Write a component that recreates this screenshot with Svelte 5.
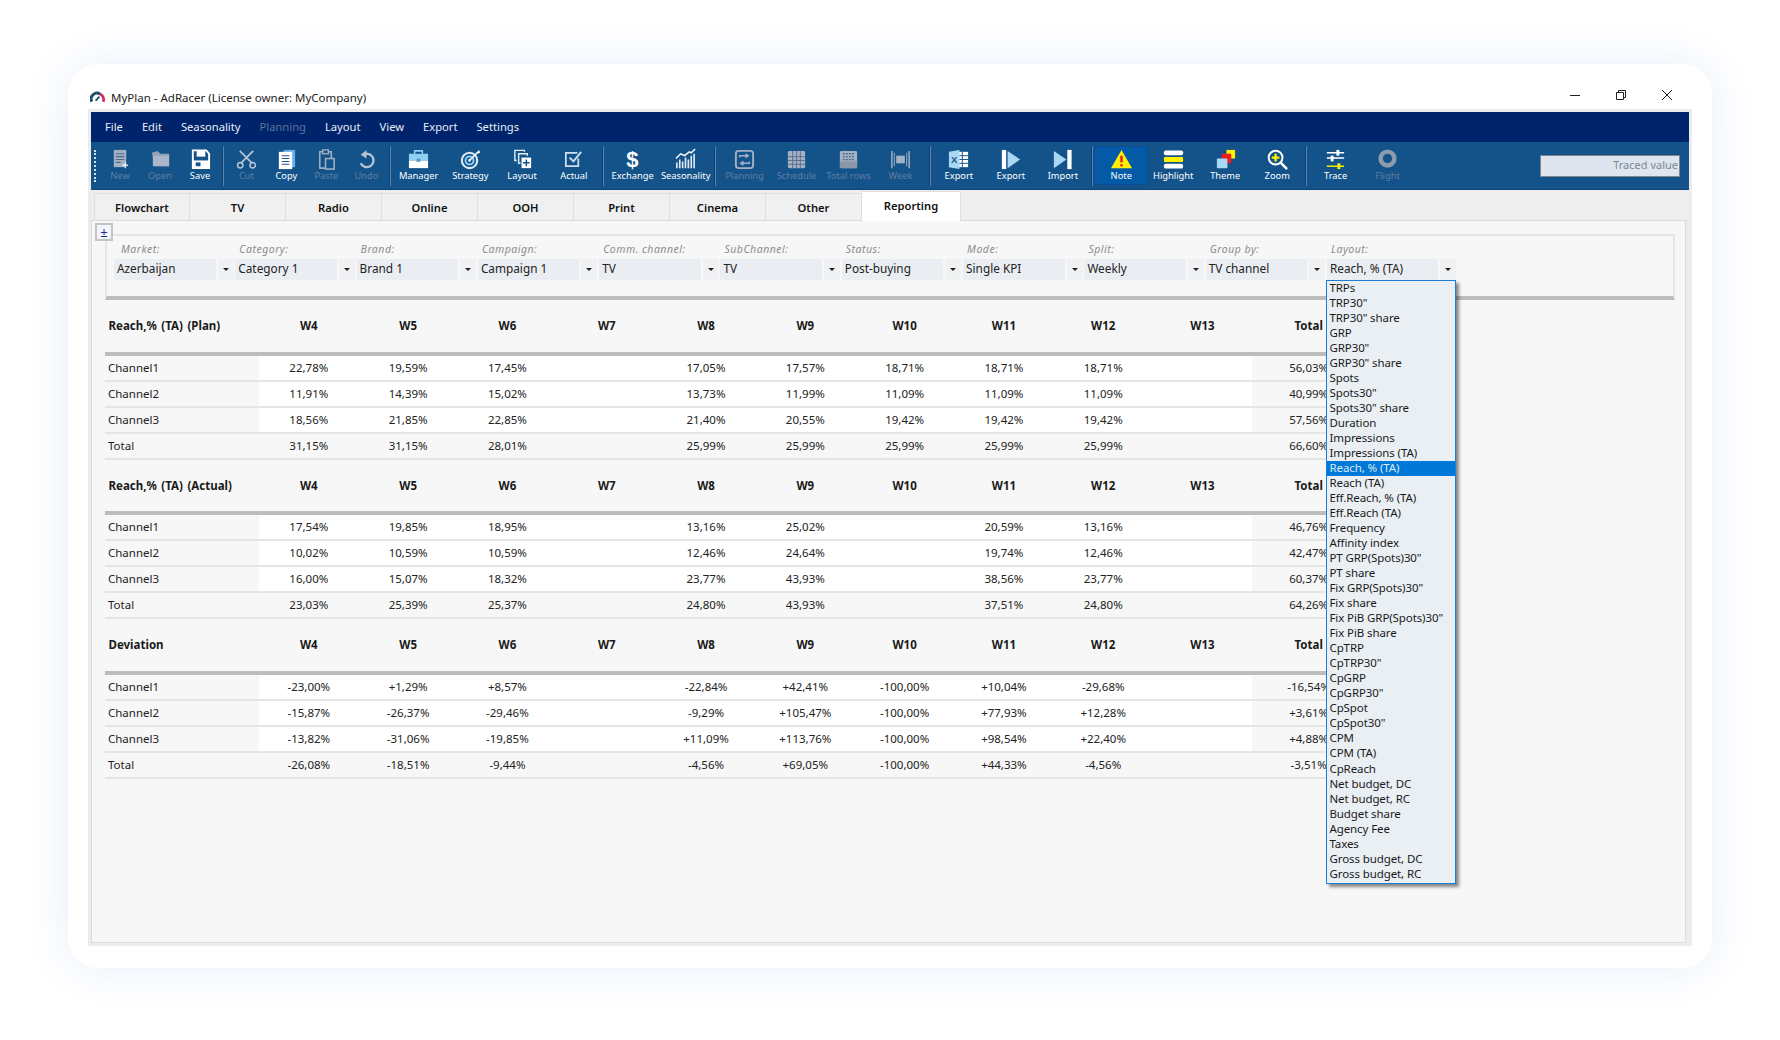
<script>
  const menu = [['File',false],['Edit',false],['Seasonality',false],['Planning',true],['Layout',false],['View',false],['Export',false],['Settings',false]];
  const groups = [
    {w:40,items:[['new','New',1],['open','Open',1],['save','Save',0]]},
    {w:40,items:[['cut','Cut',1],['copy','Copy',0],['paste','Paste',1],['undo','Undo',1]]},
    {w:51.75,items:[['manager','Manager',0],['strategy','Strategy',0],['layout','Layout',0],['actual','Actual',0]]},
    {w:53,items:[['exchange','Exchange',0],['season','Seasonality',0]]},
    {w:52,items:[['planning','Planning',1],['schedule','Schedule',1],['totalrows','Total rows',1],['week','Week',1]]},
    {w:52,items:[['excel','Export',0],['export','Export',0],['import','Import',0]]},
    {w:52,items:[['note','Note',0],['highlight','Highlight',0],['theme','Theme',0],['zoom','Zoom',0]]},
    {w:52,items:[['trace','Trace',0],['flight','Flight',1]]}
  ];
  const tabs = ['Flowchart','TV','Radio','Online','OOH','Print','Cinema','Other'];
  const filters = [['Market:','Azerbaijan'],['Category:','Category 1'],['Brand:','Brand 1'],['Campaign:','Campaign 1'],['Comm. channel:','TV'],['SubChannel:','TV'],['Status:','Post-buying'],['Mode:','Single KPI'],['Split:','Weekly'],['Group by:','TV channel']];
  const weeks = ['W4','W5','W6','W7','W8','W9','W10','W11','W12','W13','Total'];
  const blocks = [
    {title:'Reach,% (TA) (Plan)',rows:[
      ['Channel1','22,78%','19,59%','17,45%','','17,05%','17,57%','18,71%','18,71%','18,71%','','56,03%'],
      ['Channel2','11,91%','14,39%','15,02%','','13,73%','11,99%','11,09%','11,09%','11,09%','','40,99%'],
      ['Channel3','18,56%','21,85%','22,85%','','21,40%','20,55%','19,42%','19,42%','19,42%','','57,56%'],
      ['Total','31,15%','31,15%','28,01%','','25,99%','25,99%','25,99%','25,99%','25,99%','','66,60%']]},
    {title:'Reach,% (TA) (Actual)',rows:[
      ['Channel1','17,54%','19,85%','18,95%','','13,16%','25,02%','','20,59%','13,16%','','46,76%'],
      ['Channel2','10,02%','10,59%','10,59%','','12,46%','24,64%','','19,74%','12,46%','','42,47%'],
      ['Channel3','16,00%','15,07%','18,32%','','23,77%','43,93%','','38,56%','23,77%','','60,37%'],
      ['Total','23,03%','25,39%','25,37%','','24,80%','43,93%','','37,51%','24,80%','','64,26%']]},
    {title:'Deviation',rows:[
      ['Channel1','-23,00%','+1,29%','+8,57%','','-22,84%','+42,41%','-100,00%','+10,04%','-29,68%','','-16,54%'],
      ['Channel2','-15,87%','-26,37%','-29,46%','','-9,29%','+105,47%','-100,00%','+77,93%','+12,28%','','+3,61%'],
      ['Channel3','-13,82%','-31,06%','-19,85%','','+11,09%','+113,76%','-100,00%','+98,54%','+22,40%','','+4,88%'],
      ['Total','-26,08%','-18,51%','-9,44%','','-4,56%','+69,05%','-100,00%','+44,33%','-4,56%','','-3,51%']]}
  ];
  const layouts = ['TRPs','TRP30"','TRP30" share','GRP','GRP30"','GRP30" share','Spots','Spots30"','Spots30" share','Duration','Impressions','Impressions (TA)','Reach, % (TA)','Reach (TA)','Eff.Reach, % (TA)','Eff.Reach (TA)','Frequency','Affinity index','PT GRP(Spots)30"','PT share','Fix GRP(Spots)30"','Fix share','Fix PiB GRP(Spots)30"','Fix PiB share','CpTRP','CpTRP30"','CpGRP','CpGRP30"','CpSpot','CpSpot30"','CPM','CPM (TA)','CpReach','Net budget, DC','Net budget, RC','Budget share','Agency Fee','Taxes','Gross budget, DC','Gross budget, RC'];
</script>

<div class="page">
  <div class="card">
    <div class="titlebar">
      <svg class="logo" viewBox="0 0 16 12"><path d="M2 11 A6.2 6.2 0 0 1 11 3" fill="none" stroke="#1f4f6b" stroke-width="3"/><path d="M11 3 A6.2 6.2 0 0 1 14 11" fill="none" stroke="#e0245e" stroke-width="3"/><path d="M6 10 L10 5.5" stroke="#1f4f6b" stroke-width="2"/></svg>
      <span class="apptitle">MyPlan - AdRacer (License owner: MyCompany)</span>
      <div class="winctl">
        <svg viewBox="0 0 12 12"><path d="M1 6.5H11" stroke="#222" stroke-width="1"/></svg>
        <svg viewBox="0 0 12 12"><path d="M1.5 3.5H8.5V10.5H1.5ZM3.5 3.5V1.5H10.5V8.5H8.5" fill="none" stroke="#222" stroke-width="1"/></svg>
        <svg viewBox="0 0 12 12"><path d="M1 1L11 11M11 1L1 11" stroke="#222" stroke-width="1"/></svg>
      </div>
    </div>
    <div class="frame">
      <div class="menubar">
        {#each menu as m}<span class="menuitem" class:off={m[1]}>{m[0]}</span>{/each}
      </div>
      <div class="toolbar">
        <div class="grip"></div>
        {#each groups as g, gi}
          {#if gi > 0}<div class="sep"></div>{/if}
          {#each g.items as t}
            <div class="tool" class:off={t[2]} class:active={t[0]==='note'} style="width:{g.w}px">
              <svg class="ic" viewBox="0 0 24 24">
                {#if t[0]==='new'}
                  <rect x="5" y="2" width="13" height="18" fill="#a4b1c4"/><path d="M7 6H16M7 9H16M7 12H16M7 15H12" stroke="#4e6a8b" stroke-width="1.2"/><path d="M17 15V21M14 18H20" stroke="#fff" stroke-width="1.4" opacity=".8"/>
                {:else if t[0]==='open'}
                  <path d="M3 5L9 3L12 6H21V19H6Z" fill="#8ea0b8"/><path d="M4 8H21V19H4Z" fill="#aab6c8"/>
                {:else if t[0]==='save'}
                  <path d="M4 2.5H18L21 6V21H4Z" fill="none" stroke="#fff" stroke-width="2"/><path d="M8 3V9H17V3" fill="#fff"/><rect x="4" y="13" width="17" height="8" fill="#fff"/><rect x="7" y="15" width="5" height="4" fill="#14538a"/>
                {:else if t[0]==='cut'}
                  <path d="M5 3L18 16M19 3L6 16" stroke="#b6c3d3" stroke-width="1.8"/><circle cx="5.5" cy="18" r="2.8" fill="none" stroke="#b6c3d3" stroke-width="1.6"/><circle cx="18.5" cy="18" r="2.8" fill="none" stroke="#b6c3d3" stroke-width="1.6"/>
                {:else if t[0]==='copy'}
                  <rect x="9" y="2" width="12" height="18" fill="#5fb0e6"/><rect x="4" y="4" width="14" height="18" fill="#fff"/><path d="M7 8H15M7 11H15M7 14H15M7 17H15" stroke="#1d5a90" stroke-width="1.1"/>
                {:else if t[0]==='paste'}
                  <path d="M5 4H17V21H5Z" fill="none" stroke="#a4b1c4" stroke-width="1.6"/><rect x="8" y="2" width="6" height="4" fill="#14538a" stroke="#a4b1c4" stroke-width="1.4"/><rect x="11" y="11" width="9" height="11" fill="#14538a" stroke="#a4b1c4" stroke-width="1.6"/>
                {:else if t[0]==='undo'}
                  <path d="M8 7.5A7 7 0 1 1 6 16" fill="none" stroke="#b6c3d3" stroke-width="2.4"/><path d="M12 2V11L6 7Z" fill="#b6c3d3"/>
                {:else if t[0]==='manager'}
                  <path d="M8 6V3H16V6" fill="none" stroke="#8fd0f5" stroke-width="1.6"/><rect x="2" y="6" width="20" height="7" fill="#8fd0f5"/><rect x="2" y="13" width="20" height="8" fill="#fff"/><rect x="10" y="11" width="4" height="3.5" fill="#5a9dc9"/>
                {:else if t[0]==='strategy'}
                  <circle cx="11" cy="13" r="8" fill="none" stroke="#dfeaf4" stroke-width="2.2"/><circle cx="11" cy="13" r="4.2" fill="none" stroke="#8fd0f5" stroke-width="2"/><circle cx="11" cy="13" r="1.4" fill="#fff"/><path d="M11 13L19 5" stroke="#fff" stroke-width="1.6"/><path d="M18 5L21 2L22 5L19 6Z" fill="#fff"/>
                {:else if t[0]==='layout'}
                  <path d="M14 4V2.5H4V13H6" fill="none" stroke="#dfeaf4" stroke-width="1.5"/><path d="M17 8V6H8V16H10" fill="none" stroke="#dfeaf4" stroke-width="1.5"/><rect x="11" y="10" width="10" height="11" fill="#fff"/><path d="M16 12V19M12.5 15.5H19.5" stroke="#14538a" stroke-width="1.6"/>
                {:else if t[0]==='actual'}
                  <path d="M17 11V19H4V5H16" fill="none" stroke="#cfe0ee" stroke-width="1.8"/><path d="M8 10L12 14L20 4" fill="none" stroke="#cfe0ee" stroke-width="2"/>
                {:else if t[0]==='exchange'}
                  <text x="12" y="20" text-anchor="middle" font-family="Liberation Sans, sans-serif" font-weight="700" font-size="23" fill="#fff">$</text>
                {:else if t[0]==='season'}
                  <path d="M3 21V15M6 21V12M9 21V14M12 21V10M15 21V12M18 21V8M21 21V6" stroke="#dfeaf4" stroke-width="1.7"/><path d="M2 11L7 6L11 8L16 4L18 5L22 1" fill="none" stroke="#fff" stroke-width="1.5"/>
                {:else if t[0]==='planning'}
                  <rect x="3" y="3" width="18" height="18" rx="3" fill="none" stroke="#a4b1c4" stroke-width="2"/><path d="M7 10V8H15M13 6L16 8L13 10M17 14V16H9M11 14L8 16L11 18" fill="none" stroke="#a4b1c4" stroke-width="1.5"/>
                {:else if t[0]==='schedule'}
                  <rect x="3" y="3" width="18" height="18" rx="1.5" fill="#a4b1c4"/><path d="M3 9H21M3 13H21M3 17H21M8 3V21M12 3V21M16 3V21" stroke="#4e6a8b" stroke-width=".9"/>
                {:else if t[0]==='totalrows'}
                  <rect x="3" y="3" width="18" height="18" rx="1.5" fill="#a4b1c4"/><path d="M6 6H18M6 9H18M6 12H18" stroke="#4e6a8b" stroke-width="1.4" stroke-dasharray="2 1.2"/><rect x="3" y="14" width="18" height="7" fill="#8c98aa"/>
                {:else if t[0]==='week'}
                  <path d="M3 3V21M21 3V21" stroke="#a4b1c4" stroke-width="1.5"/><path d="M5.5 5V19M18.5 5V19" stroke="#a4b1c4" stroke-width="1"/><rect x="7.5" y="8" width="9" height="8" fill="#a4b1c4"/>
                {:else if t[0]==='excel'}
                  <rect x="11" y="4" width="11" height="16" fill="#fff"/><path d="M11 8H22M11 12H22M11 16H22M16 4V20" stroke="#14538a" stroke-width="1"/><path d="M2 4L13 2V22L2 20Z" fill="#a9d8f5"/><text x="7.5" y="16" text-anchor="middle" font-family="Liberation Sans, sans-serif" font-weight="700" font-size="10" fill="#14538a">X</text>
                {:else if t[0]==='export'}
                  <rect x="3" y="2" width="4.5" height="20" fill="#fff"/><path d="M9 3L22 12L9 21Z" fill="#a9d8f5"/>
                {:else if t[0]==='import'}
                  <rect x="17" y="2" width="4.5" height="20" fill="#fff"/><path d="M3 3L16 12L3 21Z" fill="#a9d8f5"/>
                {:else if t[0]==='note'}
                  <path d="M12 2L23 21H1Z" fill="#ffef00"/><path d="M12 8V15" stroke="#e0202a" stroke-width="2.6"/><circle cx="12" cy="18" r="1.4" fill="#e0202a"/>
                {:else if t[0]==='highlight'}
                  <rect x="2" y="2.5" width="20" height="5" rx="2" fill="#fff"/><rect x="2" y="9.5" width="20" height="5" rx="1" fill="#fff200"/><rect x="2" y="16.5" width="20" height="5" rx="2" fill="#fff"/>
                {:else if t[0]==='theme'}
                  <rect x="13" y="2" width="9" height="9" fill="#fff200"/><rect x="8" y="6" width="10" height="10" fill="#f01c24"/><rect x="3" y="11" width="11" height="10" rx="1" fill="#a9d8f5"/>
                {:else if t[0]==='zoom'}
                  <circle cx="10" cy="10" r="7.2" fill="none" stroke="#fff" stroke-width="2"/><path d="M15 15L22 22" stroke="#fff" stroke-width="2.6"/><path d="M10 6V14M6 10H14" stroke="#fff200" stroke-width="2.4"/>
                {:else if t[0]==='trace'}
                  <path d="M3 5H21M3 10.5H21" stroke="#fff" stroke-width="1.5"/><path d="M3 19H21" stroke="#fff200" stroke-width="1.5"/><rect x="13" y="2" width="3" height="6" fill="#fff"/><rect x="7" y="8" width="3" height="6" fill="#fff"/><rect x="14" y="16" width="3" height="6" fill="#fff200"/>
                {:else if t[0]==='flight'}
                  <circle cx="12" cy="11" r="7.2" fill="none" stroke="#8d9bac" stroke-width="4.6"/>
                {/if}
              </svg>
              <span>{t[1]}</span>
            </div>
          {/each}
        {/each}
        <div class="traced">Traced value</div>
      </div>
      <div class="tabs">
        {#each tabs as t}<div class="tab">{t}</div>{/each}
        <div class="tab current">Reporting</div>
      </div>
      <div class="panel">
        <div class="plus">±</div>
        <div class="filters">
          {#each filters as f, i}
            <div class="filter">
              <div class="lbl" class:lead={i===0}>{f[0]}</div>
              <div class="combo"><div class="field">{f[1]}</div><div class="arrow"></div></div>
            </div>
          {/each}
          <div class="filter last">
            <div class="lbl">Layout:</div>
            <div class="combo"><div class="field">Reach, % (TA)</div><div class="arrow"></div></div>
            <div class="drop">
              {#each layouts as l}<div class="opt" class:sel={l==='Reach, % (TA)'}>{l}</div>{/each}
            </div>
          </div>
        </div>
        <div class="report">
          {#each blocks as b}
            <div class="hrow">
              <div class="c first">{b.title}</div>
              {#each weeks as w}<div class="c">{w}</div>{/each}
            </div>
            {#each b.rows as r}
              <div class="row" class:total={r[0]==='Total'}>
                {#each r as v, i}
                  <div class="c" class:first={i===0} class:wk={i>0 && i<11}>{v}</div>
                {/each}
              </div>
            {/each}
          {/each}
        </div>
      </div>
    </div>
  </div>
</div>

<style>
  :global(body){margin:0;background:#fff;font-family:"Noto Sans","Open Sans",sans-serif;color:#222}
  .page{box-sizing:border-box;width:1780px;height:1040px;padding:64px 68px 72px;overflow:hidden;background:#fff}
  .card{box-sizing:border-box;width:1644px;height:904px;background:#fff;border-radius:30px;box-shadow:0 0 50px #e6edf9;padding:0 20px 22px;display:flex;flex-direction:column}
  .titlebar{height:45px;flex:none;display:flex;align-items:center;padding:21px 0 0 2px;box-sizing:border-box}
  .logo{width:15px;height:12px;margin-right:6px}
  .apptitle{font-size:11.5px;color:#222}
  .winctl{margin-left:auto;display:flex;gap:34px;margin-right:19px;margin-top:-4px}
  .winctl svg{width:12px;height:12px}
  .frame{flex:1;background:#ececec;padding:3px 3px 3px;display:flex;flex-direction:column;min-height:0}
  .menubar{height:30px;flex:none;background:#00246c;display:flex;align-items:center;padding:0 0 2px 14px;box-sizing:border-box;gap:19px;font-size:11.2px;color:#e8eef6}
  .menuitem.off{color:#5c7398}
  .toolbar{height:48px;flex:none;background:#14538a;display:flex;align-items:center;border-bottom:1px solid #0f4478;box-sizing:border-box;position:relative}
  .grip{width:0;height:32px;border-left:2px dotted #d5e2ee;margin:0 4px 0 3px}
  .tool{flex:none;height:37px;display:flex;flex-direction:column;align-items:center;justify-content:flex-start;font-size:9.3px;color:#fff;box-sizing:border-box;white-space:nowrap;padding-top:1px}
  .tool .ic{width:23px;height:23px;flex:none}
  .tool span{line-height:12px;margin-top:-1px}
  .tool.off span{color:#5f7fa2}
  .tool.active{background:#045aa6;outline:1px solid #0a4f96}
  .sep{flex:none;width:2px;height:40px;margin:0 2.2px;background:linear-gradient(90deg,#0d3f70 50%,#5a86ad 50%)}
  .traced{margin-left:auto;margin-right:9px;box-sizing:border-box;width:140px;height:22px;background:#dfe5ee;border:1px solid #7c8792;font-size:11px;color:#7d8794;text-align:right;line-height:18px;padding-right:1px}
  .tabs{height:31px;flex:none;background:#eee;display:flex;align-items:flex-end;padding:0 0 0 3px;box-sizing:border-box;border-bottom:1px solid #dcdcdc}
  .tab{box-sizing:border-box;width:96px;height:27px;border:1px solid #dedede;border-bottom:none;border-left:none;font-size:11.2px;font-weight:600;text-align:center;line-height:27px;color:#111;background:#f0f0f0}
  .tab:first-child{border-left:1px solid #dedede}
  .tab.current{height:30px;width:99px;margin-bottom:-1px;background:#fff;line-height:28px}
  .panel{flex:1;position:relative;margin-right:3px;background:#f7f7f7;border:1px solid #dcdcdc;border-top:none;padding:13px 10px 0 13px;box-sizing:border-box;min-height:0}
  .plus{position:absolute;left:3px;top:2px;width:18px;height:18px;box-sizing:border-box;border:2px solid #c4c4c4;background:#f2f5fb;color:#24308f;font-size:13px;line-height:14px;text-align:center;z-index:2}
  .filters{box-sizing:border-box;height:66px;border:2px solid #e6e6e6;border-bottom:4px solid #bcbcbc;border-top-color:#e3e3e3;display:flex;padding:6px 0 0 7px}
  .filter{flex:none;width:121.3px;position:relative}
  .lbl{font-size:10.5px;font-style:italic;color:#8c8c8c;padding-left:4px;letter-spacing:.5px;line-height:15px;height:15px}
  .lbl.lead{padding-left:7px}
  .combo{display:flex;height:21px;margin-top:2px;gap:2px;font-size:11.8px}
  .field{width:101.5px;box-sizing:border-box;background:#eaeef3;padding-left:3px;line-height:18px;white-space:nowrap;overflow:hidden}
  .arrow{width:16px;background:#eff1f3;position:relative}
  .arrow::after{content:"";position:absolute;left:5px;top:9px;border:3px solid transparent;border-top:3.5px solid #222;border-bottom:none}
  .last{width:130px}
  .last .field{width:111px}
  .drop{position:absolute;left:-1px;top:38px;width:130px;height:604px;box-sizing:border-box;background:#eaeff4;border:1.5px solid #1b7fd8;box-shadow:3px 3px 3px rgba(0,0,0,.45);z-index:3;font-size:11.5px;letter-spacing:-.1px;padding:0}
  .opt{height:15.03px;line-height:14.5px;padding-left:2.5px;color:#1a1a1a;white-space:nowrap}
  .opt.sel{background:#0078d7;color:#dbe9f6}
  .report{width:1260px}
  .hrow,.row{display:grid;grid-template-columns:154.2px repeat(10,99.3px) 113px}
  .hrow{height:55.5px;box-sizing:border-box;border-bottom:4px solid #bcbcbc;font-weight:700;font-size:11.5px;align-items:center}
  .hrow .c{text-align:center;color:#1a1a1a}
  .hrow .first{text-align:left;padding-left:3.5px;word-spacing:1.5px}
  .row{height:26px;box-sizing:border-box;border-bottom:2px solid #e5e5e5;font-size:11.5px}
  .row .c{text-align:center;line-height:24px;color:#222;white-space:nowrap}
  .row .first{text-align:left;padding-left:3px}
  .row .wk{background:#fff}
  .row.total .wk{background:transparent}
</style>
